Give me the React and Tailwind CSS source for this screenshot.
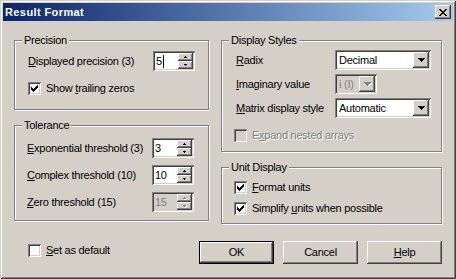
import React from "react";

const SUNKEN =
  "shadow-[inset_1px_1px_0_#808080,inset_-1px_-1px_0_#ffffff,inset_2px_2px_0_#404040,inset_-2px_-2px_0_#d4d0c8]";
const RAISED =
  "shadow-[inset_-1px_-1px_0_#404040,inset_1px_1px_0_#ffffff,inset_-2px_-2px_0_#808080,inset_2px_2px_0_#d4d0c8]";

function Pix({ rows, color, className = "" }) {
  const w = rows[0].length;
  const h = rows.length;
  const rects = [];
  rows.forEach((r, y) =>
    r.split("").forEach((c, x) => {
      if (c === "X") rects.push(<rect key={x + "-" + y} x={x} y={y} width="1" height="1" fill={color} />);
    })
  );
  return (
    <svg width={w} height={h} viewBox={`0 0 ${w} ${h}`} shapeRendering="crispEdges" className={className}>
      {rects}
    </svg>
  );
}

const CHECK = ["......X", ".....XX", "X...XXX", "XX.XXX.", "XXXXX..", ".XXX...", "..X...."];
const CLOSE = ["XX....XX", ".XX..XX.", "..XXXX..", "...XX...", "..XXXX..", ".XX..XX.", "XX....XX"];
const UP = [".X.", "XXX"];
const DOWN = ["XXX", ".X."];
const DROP = ["XXXXXXX", ".XXXXX.", "..XXX..", "...X..."];

function Text({ children, disabled, muted, className = "" }) {
  let color = "text-black ";
  if (disabled) color = "text-[#808080] [text-shadow:1px_1px_0_#ffffff] ";
  else if (muted) color = "text-[#808080] ";
  return <span className={"whitespace-nowrap leading-[13px] " + color + className}>{children}</span>;
}

function Check({ checked, disabled }) {
  return (
    <div
      className={
        "w-[13px] h-[13px] shrink-0 flex items-start justify-start p-[3px] " +
        SUNKEN +
        (disabled ? " bg-[#d4d0c8]" : " bg-white")
      }
    >
      {checked && <Pix rows={CHECK} color="#000000" />}
    </div>
  );
}

function CheckRow({ checked, disabled, children, className = "" }) {
  return (
    <div className={"flex items-center h-[13px] gap-[5px] " + className}>
      <Check checked={checked} disabled={disabled} />
      <Text disabled={disabled}>{children}</Text>
    </div>
  );
}

function SpinBtn({ rows, disabled }) {
  return (
    <div className={"h-[8px] w-[15px] bg-[#d4d0c8] flex items-center justify-center " + RAISED}>
      {disabled ? (
        <div className="relative w-[3px] h-[2px]">
          <Pix rows={rows} color="#ffffff" className="absolute left-[1px] top-[1px]" />
          <Pix rows={rows} color="#808080" className="absolute left-0 top-0" />
        </div>
      ) : (
        <Pix rows={rows} color="#000000" />
      )}
    </div>
  );
}

function Spin({ value, disabled, caret }) {
  return (
    <div className={"w-[42px] h-[20px] p-[2px] flex " + SUNKEN + (disabled ? " bg-[#d4d0c8]" : " bg-white")}>
      <div className="flex-1 flex items-center pl-[1px]">
        <Text muted={disabled}>{value}</Text>
        {caret && <div className="w-[1px] h-[13px] bg-black ml-[1px]" />}
      </div>
      <div className="w-[15px] flex flex-col">
        <SpinBtn rows={UP} disabled={disabled} />
        <SpinBtn rows={DOWN} disabled={disabled} />
      </div>
    </div>
  );
}

function Combo({ value, width, disabled }) {
  return (
    <div
      className={"h-[20px] p-[2px] flex " + SUNKEN + (disabled ? " bg-[#d4d0c8]" : " bg-white")}
      style={{ width }}
    >
      <div className="flex-1 flex items-center pl-[2px] overflow-hidden">
        <Text muted={disabled}>{value}</Text>
      </div>
      <div className={"w-[16px] h-[16px] bg-[#d4d0c8] flex items-center justify-center " + RAISED}>
        {disabled ? (
          <div className="relative w-[7px] h-[4px]">
            <Pix rows={DROP} color="#ffffff" className="absolute left-[1px] top-[1px]" />
            <Pix rows={DROP} color="#808080" className="absolute left-0 top-0" />
          </div>
        ) : (
          <Pix rows={DROP} color="#000000" />
        )}
      </div>
    </div>
  );
}

function Group({ label, className = "", children }) {
  return (
    <div
      className={
        "relative border border-[#808080] shadow-[inset_1px_1px_0_#ffffff,1px_1px_0_#ffffff] " + className
      }
    >
      <div className="absolute -top-[7px] left-[7px] px-[2px] bg-[#d4d0c8] flex">
        <Text>{label}</Text>
      </div>
      {children}
    </div>
  );
}

function U({ children }) {
  return <span className="underline underline-offset-[1px] decoration-[1px]">{children}</span>;
}

function Button({ children, isDefault }) {
  return (
    <div
      className={
        "w-[75px] h-[23px] bg-[#d4d0c8] flex items-center justify-center " +
        (isDefault
          ? "border border-black shadow-[inset_-1px_-1px_0_#404040,inset_1px_1px_0_#ffffff,inset_-2px_-2px_0_#808080,inset_2px_2px_0_#d4d0c8]"
          : RAISED)
      }
    >
      <Text>{children}</Text>
    </div>
  );
}

function SpinRow({ label, value, disabled, caret }) {
  return (
    <div className="flex items-center h-[20px]">
      <div className="w-[125px] flex">
        <Text>{label}</Text>
      </div>
      <Spin value={value} disabled={disabled} caret={caret} />
    </div>
  );
}

function ComboRow({ label, value, width, disabled }) {
  return (
    <div className="flex items-center h-[20px]">
      <div className="w-[100px] flex pl-[1px]">
        <Text>{label}</Text>
      </div>
      <Combo value={value} width={width} disabled={disabled} />
    </div>
  );
}

export default function App() {
  return (
    <div
      className={
        "w-[456px] h-[279px] bg-[#d4d0c8] p-[3px] flex flex-col text-[11px] tracking-[-0.25px] font-['Liberation_Sans',Arial,sans-serif] " +
        "shadow-[inset_1px_1px_0_#d4d0c8,inset_-1px_-1px_0_#404040,inset_2px_2px_0_#ffffff,inset_-2px_-2px_0_#808080]"
      }
    >
      {/* Caption */}
      <div className="h-[18px] shrink-0 flex items-center pl-[2px] pr-[2px] bg-[linear-gradient(to_right,#0a246a,#a6caf0)]">
        <span className="text-white font-bold text-[11px] tracking-[0.4px] leading-[13px] whitespace-nowrap">
          Result Format
        </span>
        <div className={"ml-auto w-[16px] h-[14px] bg-[#d4d0c8] flex items-center justify-center " + RAISED}>
          <Pix rows={CLOSE} color="#000000" className="ml-[-1px]" />
        </div>
      </div>

      {/* Body */}
      <div className="flex pl-[11px] pt-[19px] gap-[12px]">
        <div className="flex flex-col w-[195px]">
          <Group label="Precision" className="w-[195px] h-[70px] pt-[10px] pl-[13px]">
            <SpinRow
              label={
                <>
                  <U>D</U>isplayed precision (3)
                </>
              }
              value="5"
              caret
            />
            <CheckRow checked className="mt-[11px]">
              Show <U>t</U>railing zeros
            </CheckRow>
          </Group>
          <Group label="Tolerance" className="w-[195px] h-[96px] mt-[15px] pt-[12px] pl-[12px] flex flex-col gap-[7px]">
            <SpinRow
              label={
                <>
                  <U>E</U>xponential threshold (3)
                </>
              }
              value="3"
            />
            <SpinRow
              label={
                <>
                  <U>C</U>omplex threshold (10)
                </>
              }
              value="10"
            />
            <SpinRow
              label={
                <>
                  <U>Z</U>ero threshold (15)
                </>
              }
              value="15"
              disabled
            />
          </Group>
        </div>
        <div className="flex flex-col w-[221px]">
          <Group label="Display Styles" className="w-[221px] h-[112px] pt-[9px] pl-[13px] flex flex-col gap-[4px]">
            <ComboRow
              label={
                <>
                  <U>R</U>adix
                </>
              }
              value="Decimal"
              width={96}
            />
            <ComboRow
              label={
                <>
                  <U>I</U>maginary value
                </>
              }
              value="i (I)"
              width={42}
              disabled
            />
            <ComboRow
              label={
                <>
                  <U>M</U>atrix display style
                </>
              }
              value="Automatic"
              width={96}
            />
            <CheckRow disabled className="mt-[7px] ml-[-1px]">
              E<U>x</U>pand nested arrays
            </CheckRow>
          </Group>
          <Group label="Unit Display" className="w-[221px] h-[57px] mt-[15px] pt-[13px] pl-[12px] flex flex-col gap-[8px]">
            <CheckRow checked>
              <U>F</U>ormat units
            </CheckRow>
            <CheckRow checked>
              Simplify <U>u</U>nits when possible
            </CheckRow>
          </Group>
        </div>
      </div>

      {/* Bottom row */}
      <div className="flex mt-[17px] pl-[25px] pr-[11px]">
        <CheckRow className="mt-[3px]">
          <U>S</U>et as default
        </CheckRow>
        <div className="ml-auto flex gap-[9px]">
          <Button isDefault>OK</Button>
          <Button>Cancel</Button>
          <Button>
            <U>H</U>elp
          </Button>
        </div>
      </div>
    </div>
  );
}
